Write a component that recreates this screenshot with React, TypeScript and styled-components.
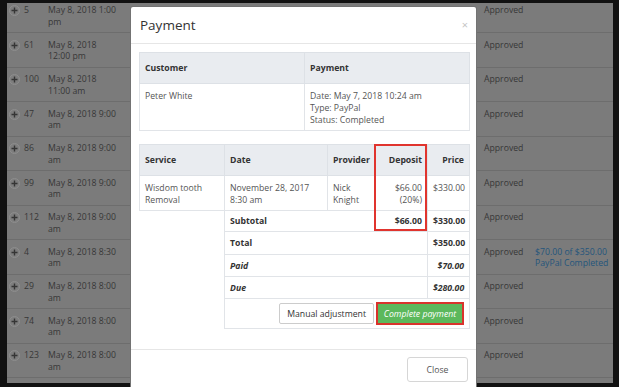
import React from "react";
import styled, { createGlobalStyle } from "styled-components";

interface BookingRow {
  id: string;
  date: string[];
  status: string;
  payment?: string[];
}

const rows: BookingRow[] = [
  { id: "5", date: ["May 8, 2018 1:00", "pm"], status: "Approved" },
  { id: "61", date: ["May 8, 2018", "12:00 pm"], status: "Approved" },
  { id: "100", date: ["May 8, 2018", "11:00 am"], status: "Approved" },
  { id: "47", date: ["May 8, 2018 9:00", "am"], status: "Approved" },
  { id: "86", date: ["May 8, 2018 9:00", "am"], status: "Approved" },
  { id: "99", date: ["May 8, 2018 9:00", "am"], status: "Approved" },
  { id: "112", date: ["May 8, 2018 9:00", "am"], status: "Approved" },
  {
    id: "4",
    date: ["May 8, 2018 8:30", "am"],
    status: "Approved",
    payment: ["$70.00 of $350.00", "PayPal Completed"],
  },
  { id: "29", date: ["May 8, 2018 8:00", "am"], status: "Approved" },
  { id: "74", date: ["May 8, 2018 8:00", "am"], status: "Approved" },
  { id: "123", date: ["May 8, 2018 8:00", "am"], status: "Approved" },
  { id: "120", date: ["May 8, 2018 8:00", "am"], status: "Approved" },
];

const GlobalStyle = createGlobalStyle`
  body {
    margin: 0;
    background: #111111;
  }
`;

const App = () => {
  return (
    <>
      <GlobalStyle />
      <Screen>
        <Page>
          <Rows>
            {rows.map((row) => (
              <Row key={row.id}>
                <Expand>
                  <svg width="7" height="7" viewBox="0 0 7 7">
                    <path d="M3.5 0.5v6M0.5 3.5h6" stroke="#353535" strokeWidth="1.4" />
                  </svg>
                </Expand>
                <Cell>{row.id}</Cell>
                <Cell>
                  {row.date.map((line) => (
                    <div key={line}>{line}</div>
                  ))}
                </Cell>
                <Cell>{row.status}</Cell>
                <PaymentInfo>
                  {row.payment &&
                    row.payment.map((line) => <div key={line}>{line}</div>)}
                </PaymentInfo>
              </Row>
            ))}
          </Rows>
        </Page>

        {/* 모달 */}
        <Modal>
          <Header>
            <Title>Payment</Title>
            <CloseX>×</CloseX>
          </Header>
          <Body>
            <Table>
              <colgroup>
                <col style={{ width: 165 }} />
                <col style={{ width: 165 }} />
              </colgroup>
              <thead>
                <tr>
                  <Th>Customer</Th>
                  <Th>Payment</Th>
                </tr>
              </thead>
              <tbody>
                <tr>
                  <Td>Peter White</Td>
                  <Td>
                    <div>Date: May 7, 2018 10:24 am</div>
                    <div>Type: PayPal</div>
                    <div>Status: Completed</div>
                  </Td>
                </tr>
              </tbody>
            </Table>

            <ServiceWrap>
              <Table>
                <colgroup>
                  <col style={{ width: 85 }} />
                  <col style={{ width: 103 }} />
                  <col style={{ width: 48 }} />
                  <col style={{ width: 52 }} />
                  <col style={{ width: 42 }} />
                </colgroup>
                <thead>
                  <tr>
                    <Th>Service</Th>
                    <Th>Date</Th>
                    <Th>Provider</Th>
                    <Th $right>Deposit</Th>
                    <Th $right>Price</Th>
                  </tr>
                </thead>
                <tbody>
                  <tr>
                    <Td>
                      <div>Wisdom tooth</div>
                      <div>Removal</div>
                    </Td>
                    <Td>
                      <div>November 28, 2017</div>
                      <div>8:30 am</div>
                    </Td>
                    <Td>
                      <div>Nick</div>
                      <div>Knight</div>
                    </Td>
                    <Td $right>
                      <div>$66.00</div>
                      <div>(20%)</div>
                    </Td>
                    <Td $right>$330.00</Td>
                  </tr>
                  <tr>
                    <Blank rowSpan={5} />
                    <SumTd colSpan={2} $h={21}>Subtotal</SumTd>
                    <SumTd $right $h={21}>$66.00</SumTd>
                    <SumTd $right $h={21}>$330.00</SumTd>
                  </tr>
                  <tr>
                    <SumTd colSpan={3} $h={23}>Total</SumTd>
                    <SumTd $right $h={23}>$350.00</SumTd>
                  </tr>
                  <tr>
                    <SumTd colSpan={3} $italic>Paid</SumTd>
                    <SumTd $right $italic>$70.00</SumTd>
                  </tr>
                  <tr>
                    <SumTd colSpan={3} $italic>Due</SumTd>
                    <SumTd $right $italic>$280.00</SumTd>
                  </tr>
                  <tr>
                    <ActionTd colSpan={4}>
                      <Actions>
                        <Button>Manual adjustment</Button>
                        <GreenButton>Complete payment</GreenButton>
                      </Actions>
                    </ActionTd>
                  </tr>
                </tbody>
              </Table>
              <Highlight />
            </ServiceWrap>
          </Body>
          <Footer>
            <CloseButton>Close</CloseButton>
          </Footer>
        </Modal>
      </Screen>
    </>
  );
};

export default App;

const Screen = styled.div`
  position: relative;
  width: 619px;
  height: 387px;
  box-sizing: border-box;
  padding: 3px 6px 4px 7px;
  background: #111111;
  overflow: hidden;
`;

const Page = styled.div`
  height: 100%;
  background: #7b7b7b;
  overflow: hidden;
  font-family: "Open Sans", "Liberation Sans", sans-serif;
  font-size: 8.7px;
  line-height: 11.5px;
  color: #373737;
`;

const Rows = styled.div`
  margin-top: -5.5px;
`;

const Row = styled.div`
  display: grid;
  grid-template-columns: 15px 24px 436px 51px 1fr;
  height: 34.5px;
  box-sizing: border-box;
  padding: 6.5px 0 0 2px;
  border-top: 1px solid #6d6d6d;
`;

const Expand = styled.span`
  width: 11px;
  height: 11px;
  box-sizing: border-box;
  border: 1px solid #8e8e8e;
  border-radius: 50%;
  background: #7e7e7e;
  display: flex;
  align-items: center;
  justify-content: center;
`;

const Cell = styled.div`
  white-space: nowrap;
`;

const PaymentInfo = styled.div`
  color: #24557c;
  white-space: nowrap;
`;

const Modal = styled.div`
  position: absolute;
  left: 130px;
  top: 6px;
  width: 347px;
  height: 392px;
  box-sizing: border-box;
  background: #ffffff;
  border: 1px solid rgba(0, 0, 0, 0.55);
  border-radius: 3px;
  font-family: "Open Sans", "Liberation Sans", sans-serif;
  font-size: 8.7px;
  line-height: 12px;
  color: #555555;
`;

const Header = styled.div`
  display: flex;
  align-items: center;
  justify-content: space-between;
  height: 36px;
  padding: 0 8px 0 9px;
  border-bottom: 1px solid #e6e6e6;
`;

const Title = styled.h4`
  margin: 0;
  font-size: 13.5px;
  font-weight: 400;
  color: #333333;
`;

const CloseX = styled.span`
  font-size: 11px;
  color: #c4c4c4;
`;

const Body = styled.div`
  padding: 8px 7px 20px 8px;
`;

const Table = styled.table`
  width: 330px;
  table-layout: fixed;
  border-collapse: collapse;
`;

const Th = styled.th<{ $right?: boolean }>`
  height: 31px;
  padding: 0 5px;
  box-sizing: border-box;
  background: #e9ecf0;
  border: 1px solid #dde1e6;
  text-align: ${(props) => (props.$right ? "right" : "left")};
  font-weight: 700;
  color: #333333;
`;

const Td = styled.td<{ $right?: boolean }>`
  padding: 6px 5px 4px;
  border: 1px solid #e1e4e8;
  vertical-align: top;
  text-align: ${(props) => (props.$right ? "right" : "left")};
  white-space: nowrap;
`;

const ServiceWrap = styled.div`
  position: relative;
  margin-top: 13px;
`;

const Blank = styled.td`
  border: none;
`;

const SumTd = styled.td<{ $right?: boolean; $italic?: boolean; $h?: number }>`
  height: ${(props) => props.$h || 22}px;
  padding: 0 5px;
  box-sizing: border-box;
  border: 1px solid #e1e4e8;
  text-align: ${(props) => (props.$right ? "right" : "left")};
  font-weight: 700;
  font-style: ${(props) => (props.$italic ? "italic" : "normal")};
  color: #333333;
`;

const ActionTd = styled.td`
  height: 30px;
  padding: 0 5px;
  box-sizing: border-box;
  border: 1px solid #e1e4e8;
`;

const Actions = styled.div`
  display: flex;
  justify-content: flex-end;
  align-items: center;
  gap: 2px;
`;

const Button = styled.button`
  height: 21px;
  padding: 0 7px;
  background: #ffffff;
  border: 1px solid #cccccc;
  border-radius: 2px;
  font-family: "Open Sans", "Liberation Sans", sans-serif;
  font-size: 8.7px;
  color: #333333;
`;

const GreenButton = styled.button`
  height: 23px;
  width: 88px;
  padding: 0;
  background: #5cb85c;
  border: 2px solid #d9332c;
  font-family: "Open Sans", "Liberation Sans", sans-serif;
  font-size: 8.7px;
  font-style: italic;
  color: #ffffff;
`;

const Highlight = styled.div`
  position: absolute;
  left: 235px;
  top: 0;
  width: 53px;
  height: 87px;
  box-sizing: border-box;
  border: 2px solid #e0342e;
  pointer-events: none;
`;

const Footer = styled.div`
  display: flex;
  justify-content: flex-end;
  padding: 7px 8px;
  border-top: 1px solid #e6e6e6;
`;

const CloseButton = styled.button`
  width: 61px;
  height: 25px;
  background: #ffffff;
  border: 1px solid #d6d6d6;
  border-radius: 3px;
  font-family: "Open Sans", "Liberation Sans", sans-serif;
  font-size: 8.7px;
  color: #555555;
`;
